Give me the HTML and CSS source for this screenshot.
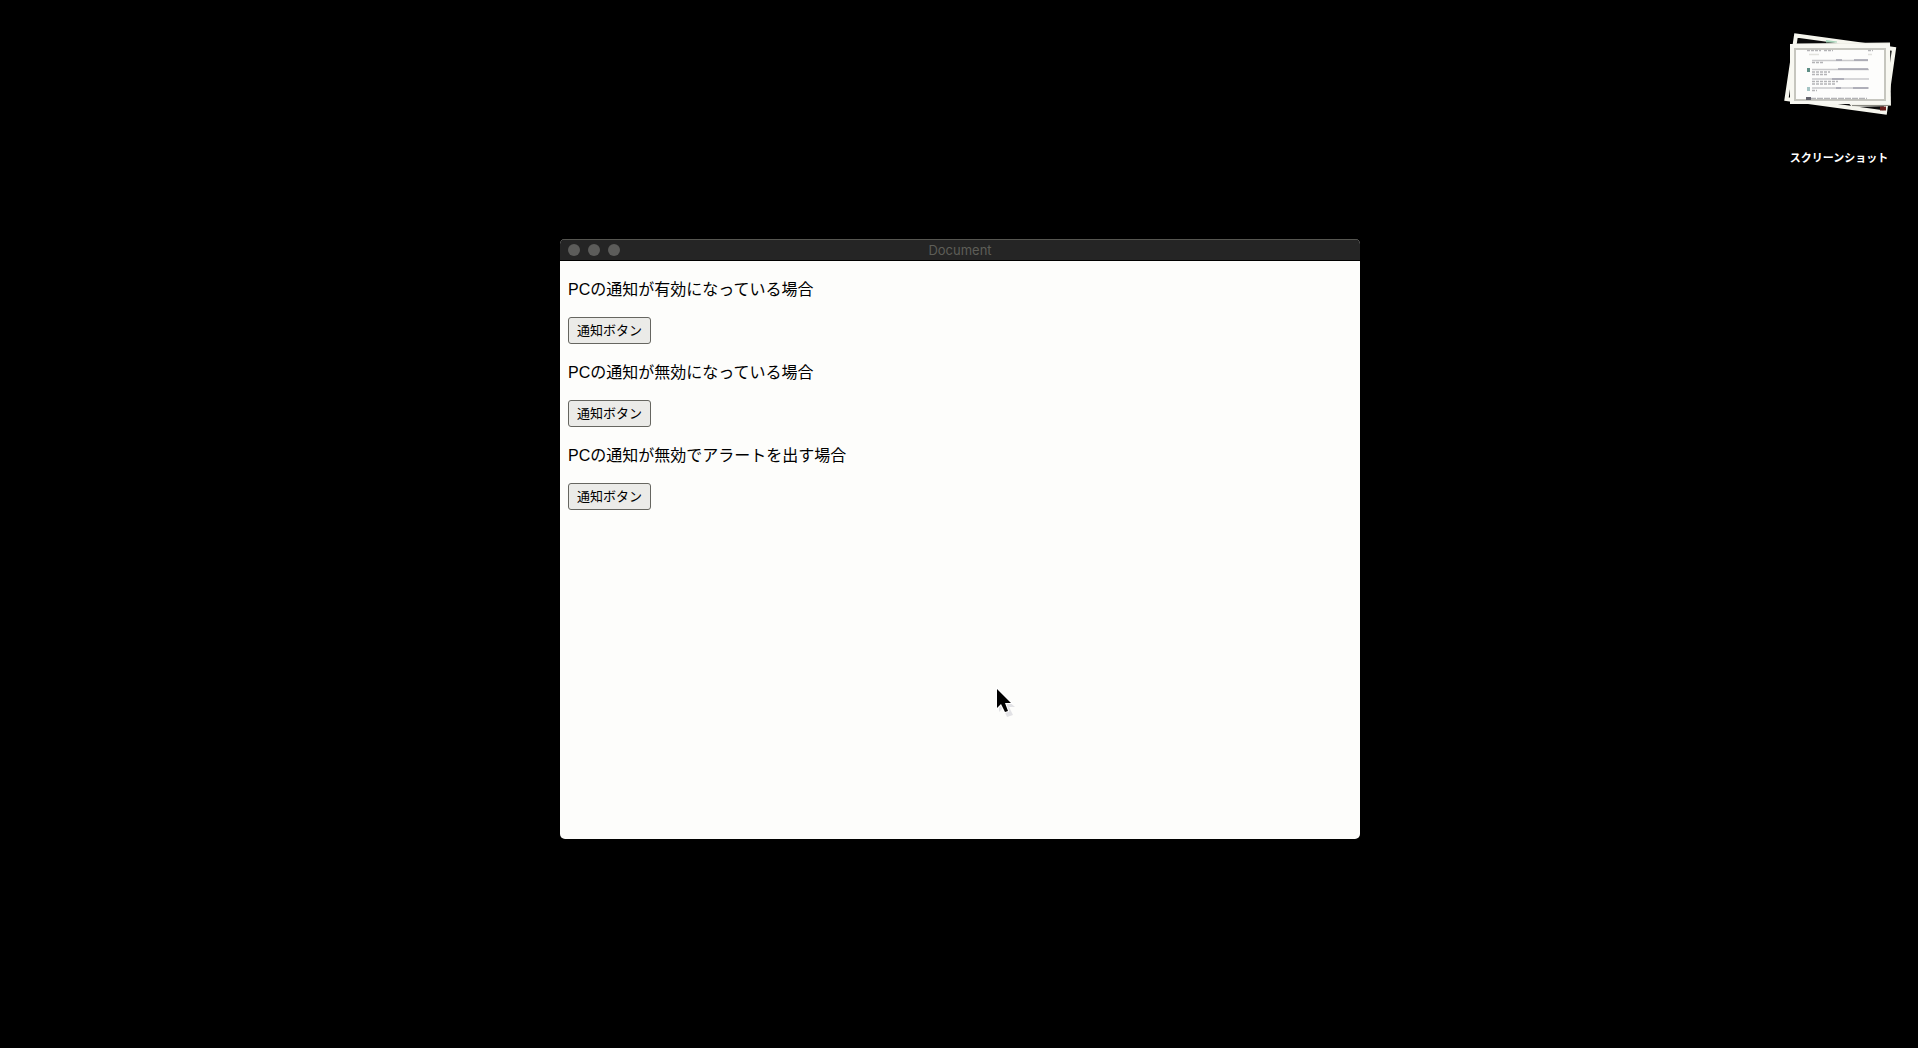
FILE: index.html
```html
<!DOCTYPE html>
<html lang="ja">
<head>
<meta charset="utf-8">
<title>Document</title>
<link rel="stylesheet" href="styles.css">
</head>
<body>
<main class="desktop">
  <figure class="stack">
    <svg class="stack-art" viewBox="-1 0 116 88" aria-hidden="true">
      <path d="M14 7.500 L112 21 L103 84.500 L4.500 71Z" fill="#0a0a0a" stroke="#f6f6ee" stroke-width="4"/>
      <path d="M98 78.500h6v4h-6z" fill="#6b1f1c"/>
      <path d="M14 15.500 L108 14.500 L109 78 L70 79Z" fill="#f0f0e8"/>
      <path d="M44 12l11 1.500v1h-11z" fill="#a5d3b8"/>
      <path d="M70 77h39v1H70z" fill="#8a8a82"/>
      <rect x="8" y="16" width="100" height="60" fill="#f8f8f2"/>
      <rect x="12" y="20" width="92" height="52" fill="#fdfdfc"/>
      <rect x="13" y="21" width="90" height="51" fill="none" stroke="#c6c6bf" stroke-width="2"/>
      <g fill="none" stroke="#b4b4b6" stroke-width="1.500">
        <path d="M25 22.500h14M42 22.500h9M86 22.500h5" stroke-dasharray="3 1"/>
        <path d="M27 26.500h10M86 26.500h4" stroke="#e2e2dd"/>
        <path d="M30 32.500h56M30 41.500h57M30 51h57M30 60h57" stroke="#c9c9cb"/>
        <path d="M54 32h6M72 32h14M56 41h30M50 51h12M54 60h5M71 60h15" stroke="#a2a2ae"/>
        <path d="M30 34.500h12M30 44h18M30 46.500h16M30 53.500h26M30 56h24M30 62.500h5" stroke-dasharray="3 1"/>
        <path d="M28 70.500h57" stroke-dasharray="6 1"/>
      </g>
      <path d="M25 40h3v4h-3z" fill="#5f8f86"/>
      <path d="M25 59h3v4h-3z" fill="#a4c4c4"/>
      <path d="M24 69h5v3h-5z" fill="#62626c"/>
    </svg>
    <figcaption class="stack-name">スクリーンショット</figcaption>
  </figure>

  <section class="window">
    <header class="titlebar">
      <div class="lights">
        <button class="light" type="button" aria-label="閉じる"></button>
        <button class="light" type="button" aria-label="しまう"></button>
        <button class="light" type="button" aria-label="拡大"></button>
      </div>
      <h1 class="title">Document</h1>
    </header>
    <div class="content">
      <p class="text" id="enabled">PCの通知が有効になっている場合</p>
      <button class="notify" type="button" aria-describedby="enabled">通知ボタン</button>
      <p class="text" id="disabled">PCの通知が無効になっている場合</p>
      <button class="notify" type="button" aria-describedby="disabled">通知ボタン</button>
      <p class="text" id="alert">PCの通知が無効でアラートを出す場合</p>
      <button class="notify" type="button" aria-describedby="alert">通知ボタン</button>
    </div>
  </section>

  <svg class="cursor" viewBox="0 0 24 32" aria-hidden="true">
    <path d="M3 4v19l4-4 4 9 6-2-4-8h6z" fill="#d6d6dc" opacity=".7"/>
    <path d="M1 0v19l4-4 4 8 3-1-3-8h6z" fill="#000" stroke="#fff" stroke-width="2" paint-order="stroke"/>
  </svg>
</main>
</body>
</html>
```
FILE: styles.css
```css
* {
  box-sizing: border-box;
}

body {
  margin: 0;
  background: #000;
  font-family: "Liberation Sans", "Noto Sans CJK JP", sans-serif;
}

.desktop {
  position: relative;
  min-height: 100vh;
  overflow: hidden;
}

.stack {
  position: absolute;
  top: 28px;
  right: 21px;
  margin: 0;
  display: flex;
  flex-direction: column;
  align-items: center;
  gap: 33px;
}

.stack-art {
  width: 116px;
  height: 88px;
}

.stack-name {
  color: #fff;
  font-size: 11px;
  line-height: 18px;
  font-weight: 700;
}

.window {
  position: absolute;
  top: 239px;
  left: 560px;
  width: 800px;
  height: 600px;
  display: flex;
  flex-direction: column;
  border-radius: 5px;
  overflow: hidden;
  background: #fdfdfb;
}

.titlebar {
  display: grid;
  grid-template-columns: 1fr auto 1fr;
  align-items: center;
  height: 22px;
  padding: 0 8px;
  background: #252525;
  border-top: 1px solid #555550;
  border-bottom: 1px solid #000;
}

.lights {
  display: flex;
  gap: 8px;
}

.light {
  width: 12px;
  height: 12px;
  padding: 0;
  border: 0;
  border-radius: 50%;
  background: #5c5c5a;
}

.title {
  margin: 0;
  color: #5e5e58;
  font-family: Inter, sans-serif;
  font-size: 13px;
  line-height: 20px;
  font-weight: 400;
}

.content {
  flex: 1;
  display: flex;
  flex-direction: column;
  align-items: flex-start;
  gap: 15px;
  padding: 15px 8px;
}

.text {
  margin: 0;
  padding-top: 2px;
  color: #000;
  font-size: 16px;
  line-height: 24px;
}

.notify {
  height: 27px;
  padding: 0 8px 2px;
  border: 1px solid #666660;
  border-radius: 3px;
  background: #ebebe8;
  color: #000;
  font-family: inherit;
  font-size: 13px;
}

.cursor {
  position: absolute;
  top: 689px;
  left: 996px;
  width: 24px;
  height: 32px;
  overflow: visible;
}
```
